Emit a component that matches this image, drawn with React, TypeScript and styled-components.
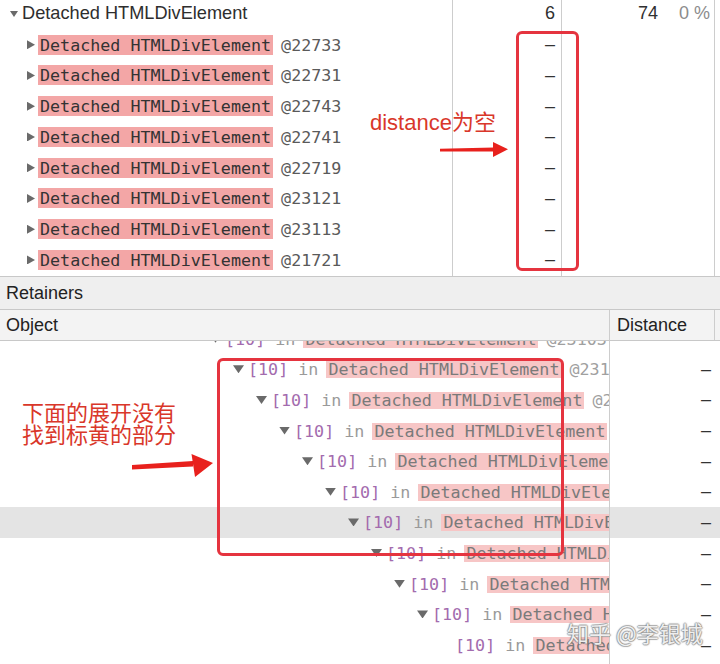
import React from "react";
import styled, { createGlobalStyle } from "styled-components";

const SANS = `"Liberation Sans", Arial, "Noto Sans CJK SC", sans-serif`;
const MONO = `"DejaVu Sans Mono", "Liberation Mono", monospace`;
const CJK = `"Liberation Sans", "Noto Sans CJK SC", sans-serif`;

const GlobalStyle = createGlobalStyle`
  html, body { margin: 0; padding: 0; background: #fff; }
  body { width: 720px; height: 664px; overflow: hidden; font-family: ${SANS}; }
  * { box-sizing: border-box; }
`;

const Page = styled.div`
  position: relative;
  width: 720px;
  height: 664px;
  overflow: hidden;
  display: flex;
  flex-direction: column;
  background: #fff;
  color: #303030;
  font-family: ${SANS};
  font-size: 18px;
`;

/* ---------- top summary pane ---------- */
const TopPane = styled.div`
  height: 277px;
  flex: none;
  overflow: hidden;
  display: flex;
  flex-direction: column;
  border-bottom: 1px solid #c8c8c8;
`;

const TopList = styled.div`
  margin-top: -1.5px;
  flex: 1;
  display: flex;
  flex-direction: column;
`;

const TopRow = styled.div<{ $grow?: boolean }>`
  display: grid;
  grid-template-columns: 453px 109px 153px 1fr;
  height: ${(p) => (p.$grow ? "auto" : "30.75px")};
  flex: ${(p) => (p.$grow ? "1" : "none")};
`;

const Cell = styled.div`
  display: flex;
  align-items: center;
  min-width: 0;
  overflow: hidden;
  white-space: nowrap;
  border-right: 1px solid #cdcdcd;
`;

const NameCell = styled(Cell)<{ $indent: number }>`
  padding-left: ${(p) => p.$indent}px;
`;

const ValueCell = styled(Cell)`
  justify-content: flex-end;
  padding-right: 6px;
  color: #303030;
`;

const SizeCell = styled(Cell)`
  justify-content: flex-end;
  padding-right: 4px;
`;

const EndCell = styled.div``;

const Percent = styled.span`
  margin-left: 21px;
  color: #8c8c8c;
`;

const TriDown = styled.span<{ $w: number; $h: number; $hidden?: boolean }>`
  flex: none;
  display: inline-block;
  width: ${(p) => p.$w}px;
  height: ${(p) => p.$h}px;
  background: ${(p) => (p.$hidden ? "transparent" : "#6a6a6a")};
  clip-path: polygon(0 0, 100% 0, 50% 100%);
`;

const TriRight = styled.span`
  flex: none;
  display: inline-block;
  width: 8px;
  height: 9px;
  background: #6a6a6a;
  clip-path: polygon(0 0, 100% 50%, 0 100%);
  margin-right: 5px;
`;

const GroupName = styled.span`
  margin-left: 4px;
  font-size: 18.2px;
  color: #2e2e2e;
`;

const Mono = styled.span`
  font-family: ${MONO};
  font-size: 16.7px;
  white-space: pre;
`;

const Pink = styled.span<{ $soft?: boolean }>`
  display: inline-block;
  padding: 0 2px;
  margin: 0 -2px;
  line-height: ${(p) => (p.$soft ? "17px" : "20px")};
  background: ${(p) => (p.$soft ? "#f7c6c6" : "#f3a6a6")};
  color: ${(p) => (p.$soft ? "#7a7a7a" : "#333")};
`;

const NodeId = styled.span<{ $soft?: boolean }>`
  color: ${(p) => (p.$soft ? "#a0a0a0" : "#5a5a5a")};
`;

const Dash = styled.span`
  color: #333;
`;

/* ---------- retainers ---------- */
const SectionBar = styled.div`
  height: 33px;
  flex: none;
  display: flex;
  align-items: center;
  padding-left: 6px;
  background: #efefef;
  border-bottom: 1px solid #c8c8c8;
  color: #222;
`;

const HeaderRow = styled.div`
  height: 31px;
  flex: none;
  display: grid;
  grid-template-columns: 610px 1fr;
  background: #f3f3f3;
  border-bottom: 1px solid #c8c8c8;
  color: #222;
`;

const HeadCell = styled.div<{ $first?: boolean }>`
  display: flex;
  align-items: center;
  padding-left: ${(p) => (p.$first ? 6 : 7)}px;
  border-right: 1px solid #cdcdcd;
  margin-right: ${(p) => (p.$first ? 0 : 5)}px;
`;

const RetBody = styled.div`
  flex: 1;
  overflow: hidden;
`;

const RetList = styled.div`
  margin-top: -17.7px;
`;

const RetRow = styled.div<{ $selected?: boolean }>`
  display: grid;
  grid-template-columns: 610px 1fr;
  height: 30.65px;
  background: ${(p) => (p.$selected ? "#e4e4e4" : "transparent")};
`;

const ObjCell = styled.div<{ $indent: number }>`
  display: flex;
  align-items: center;
  padding-left: ${(p) => p.$indent}px;
  overflow: hidden;
  white-space: nowrap;
  border-right: 1px solid #cdcdcd;
`;

const DistCell = styled.div`
  display: flex;
  align-items: center;
  justify-content: flex-end;
  padding-right: 9px;
`;

const Edge = styled.span`
  color: #a36bae;
`;

const InWord = styled.span`
  color: #9a9a9a;
`;

/* ---------- annotations (overlay) ---------- */
const Box = styled.div<{ $l: number; $t: number; $w: number; $h: number }>`
  position: absolute;
  left: ${(p) => p.$l}px;
  top: ${(p) => p.$t}px;
  width: ${(p) => p.$w}px;
  height: ${(p) => p.$h}px;
  border: 3px solid #e5343f;
  border-radius: 6px;
  pointer-events: none;
`;

const Note = styled.div<{ $l: number; $t: number }>`
  position: absolute;
  left: ${(p) => p.$l}px;
  top: ${(p) => p.$t}px;
  font-family: ${CJK};
  font-size: 22px;
  line-height: 22px;
  color: #d9372a;
  white-space: nowrap;
`;

const ArrowSvg = styled.svg<{ $l: number; $t: number }>`
  position: absolute;
  left: ${(p) => p.$l}px;
  top: ${(p) => p.$t}px;
  overflow: visible;
`;

const Watermark = styled.div`
  position: absolute;
  left: 567px;
  top: 620px;
  font-family: "Noto Sans CJK SC", sans-serif;
  font-size: 22px;
  line-height: 24px;
  color: rgba(250, 250, 250, 0.92);
  text-shadow: 1px 0 1px rgba(110, 110, 110, 0.55), -1px 0 1px rgba(110, 110, 110, 0.55),
    0 1px 1px rgba(110, 110, 110, 0.55), 0 -1px 1px rgba(110, 110, 110, 0.55);
  white-space: nowrap;
`;

const topChildren = ["22733", "22731", "22743", "22741", "22719", "23121", "23113", "21721"];
const retIds = ["23103", "23105", "23107", "23109", "23111", "23115", "23117", "23119", "23123", "23125", "23127", "23129"];

export default function App() {
  return (
    <Page>
      <GlobalStyle />
      <TopPane>
        <TopList>
          <TopRow>
            <NameCell $indent={10}>
              <TriDown $w={8} $h={6} />
              <GroupName>Detached HTMLDivElement</GroupName>
            </NameCell>
            <ValueCell>6</ValueCell>
            <SizeCell>
              74<Percent>0 %</Percent>
            </SizeCell>
            <EndCell />
          </TopRow>
          {topChildren.map((id) => (
            <TopRow key={id}>
              <NameCell $indent={27}>
                <TriRight />
                <Mono>
                  <Pink>Detached HTMLDivElement</Pink>
                  <NodeId> @{id}</NodeId>
                </Mono>
              </NameCell>
              <ValueCell>
                <Dash>–</Dash>
              </ValueCell>
              <SizeCell />
              <EndCell />
            </TopRow>
          ))}
          <TopRow $grow>
            <Cell />
            <Cell />
            <Cell />
            <EndCell />
          </TopRow>
        </TopList>
      </TopPane>

      <SectionBar>Retainers</SectionBar>
      <HeaderRow>
        <HeadCell $first>Object</HeadCell>
        <HeadCell>Distance</HeadCell>
      </HeaderRow>

      <RetBody>
        <RetList>
          {retIds.map((id, k) => (
            <RetRow key={id} $selected={k === 6}>
              <ObjCell $indent={210 + 23 * k}>
                <TriDown $w={11} $h={8} $hidden={k >= 10} style={{ marginRight: 4 }} />
                <Mono>
                  <Edge>[10]</Edge>
                  <InWord> in </InWord>
                  <Pink $soft>Detached HTMLDivElement</Pink>
                  <NodeId $soft> @{id}</NodeId>
                </Mono>
              </ObjCell>
              <DistCell>
                <Dash>–</Dash>
              </DistCell>
            </RetRow>
          ))}
        </RetList>
      </RetBody>

      {/* annotations */}
      <Box $l={516} $t={31} $w={63} $h={240} />
      <Box $l={217} $t={358} $w={347} $h={198} />

      <Note $l={370} $t={112}>distance为空</Note>
      <ArrowSvg $l={436} $t={138} width={76} height={24} viewBox="0 0 76 24">
        <polygon points="4,10.8 58,9.6 58,13.6 4,13.6" fill="#e8211d" />
        <polygon points="57,4 72,11.2 57,19" fill="#e8211d" />
      </ArrowSvg>

      <Note $l={22} $t={403}>
        下面的展开没有
        <br />
        找到标黄的部分
      </Note>
      <ArrowSvg $l={128} $t={450} width={90} height={32} viewBox="0 0 90 32">
        <polygon points="4,15 65,11 65,16.5 4,19.5" fill="#e8211d" />
        <polygon points="63.5,4 85,13 67,27" fill="#e8211d" />
      </ArrowSvg>

      <Watermark>知乎 @李银城</Watermark>
    </Page>
  );
}
